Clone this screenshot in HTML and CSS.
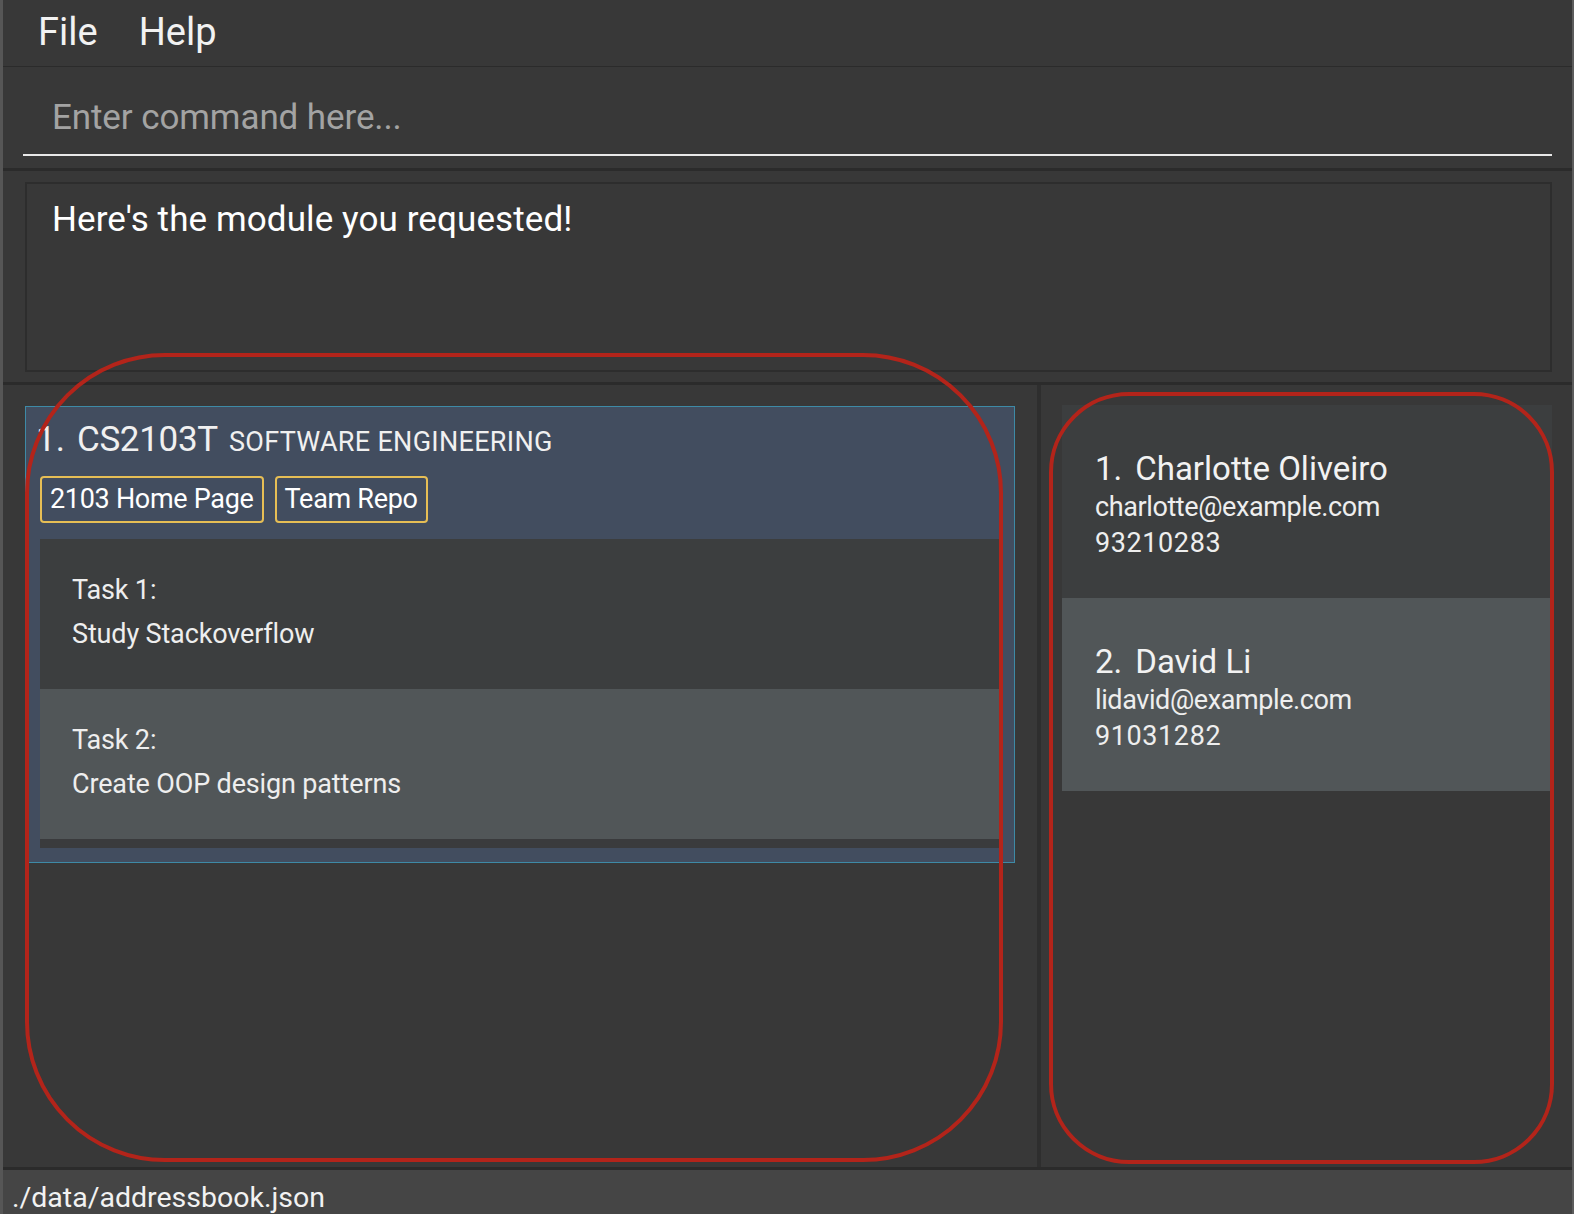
FILE: index.html
```html
<!DOCTYPE html>
<html lang="en">
<head>
<meta charset="utf-8">
<title>Module Book</title>
<link rel="stylesheet" href="styles.css">
</head>
<body>
<div class="window">
  <div class="menubar">
    <span class="menu-item">File</span>
    <span class="menu-item">Help</span>
  </div>
  <div class="command-area">
    <div class="command-field">Enter command here...</div>
  </div>
  <div class="result-area">
    <div class="result-box">Here's the module you requested!</div>
  </div>
  <div class="lists">
    <div class="module-panel">
      <div class="module-card">
        <div class="module-header">
          <span class="idx">1.</span>
          <span class="code">CS2103T</span>
          <span class="title">SOFTWARE ENGINEERING</span>
        </div>
        <div class="tags">
          <span class="tag">2103 Home Page</span>
          <span class="tag">Team Repo</span>
        </div>
        <div class="task-list">
          <div class="task even">
            <div>Task 1:</div>
            <div>Study Stackoverflow</div>
          </div>
          <div class="task odd">
            <div>Task 2:</div>
            <div>Create OOP design patterns</div>
          </div>
        </div>
      </div>
    </div>
    <div class="divider"></div>
    <div class="person-panel">
      <div class="person-list">
        <div class="person even">
          <div class="name"><span class="pidx">1.</span>Charlotte Oliveiro</div>
          <div class="detail email">charlotte@example.com</div>
          <div class="detail phone">93210283</div>
        </div>
        <div class="person odd">
          <div class="name"><span class="pidx">2.</span>David Li</div>
          <div class="detail email">lidavid@example.com</div>
          <div class="detail phone">91031282</div>
        </div>
      </div>
    </div>
  </div>
  <div class="statusbar">./data/addressbook.json</div>
</div>
<div class="annot annot-left"></div>
<div class="annot annot-right"></div>
</body>
</html>
```
FILE: styles.css
```css
html, body {
  margin: 0;
  padding: 0;
  background: #383838;
  overflow: hidden;
}
body {
  width: 1574px;
  height: 1214px;
  position: relative;
  font-family: "Roboto", "Liberation Sans", sans-serif;
  color: #ffffff;
}
.window {
  box-sizing: border-box;
  width: 1574px;
  height: 1214px;
  display: flex;
  flex-direction: column;
  border-left: 3px solid #565656;
  border-right: 2px solid #5c5c5c;
  background: #383838;
}
.menubar {
  height: 66px;
  flex: none;
  display: flex;
  gap: 41px;
  padding-left: 35px;
  border-bottom: 1px solid #2b2b2b;
}
.menu-item {
  font-size: 38px;
  line-height: 46px;
  margin-top: 9px;
  color: #f2f2f2;
}
.command-area {
  height: 101px;
  flex: none;
  padding: 0 20px;
  border-bottom: 3px solid #2b2b2b;
}
.command-field {
  margin-top: 30px;
  height: 59px;
  box-sizing: border-box;
  padding-left: 29px;
  font-size: 35px;
  line-height: 42px;
  color: #a3a3a3;
  letter-spacing: -0.1px;
  border-bottom: 2px solid #e8e8e8;
}
.result-area {
  height: 214px;
  flex: none;
  box-sizing: border-box;
  padding: 11px 20px 13px 22px;
  border-bottom: 3px solid #2b2b2b;
}
.result-box {
  box-sizing: border-box;
  height: 190px;
  border: 2px solid #2d2d2d;
  padding: 15px 25px;
  font-size: 35px;
  line-height: 42px;
  letter-spacing: 0.1px;
  color: #ffffff;
}
.lists {
  flex: 1;
  display: flex;
  min-height: 0;
  border-bottom: 3px solid #2b2b2b;
}
.module-panel {
  width: 1034px;
  flex: none;
  box-sizing: border-box;
  padding: 21px 22px 0 22px;
}
.divider {
  width: 4px;
  flex: none;
  background: #2e2e2e;
}
.person-panel {
  flex: 1;
  box-sizing: border-box;
  padding: 20px 20px 0 21px;
}
.module-card {
  width: 990px;
  box-sizing: border-box;
  background: #424d5f;
  border: 1.5px solid #3e8aa6;
  padding: 0 15px 14px 14px;
}
.module-header {
  padding-top: 12px;
  display: flex;
  align-items: baseline;
  line-height: 42px;
}
.idx {
  font-size: 35px;
  margin-left: -4px;
  margin-right: 12px;
  color: #f0f0f0;
}
.code {
  font-size: 35px;
  margin-right: 11px;
  color: #f0f0f0;
  letter-spacing: -0.3px;
}
.title {
  font-size: 27px;
  letter-spacing: 0.3px;
  color: #f0f0f0;
}
.tags {
  display: flex;
  gap: 11px;
  margin-top: 13px;
}
.tag {
  border: 2px solid #e6be55;
  border-radius: 4px;
  padding: 0 8px;
  font-size: 27px;
  line-height: 43px;
  letter-spacing: -0.3px;
  color: #ffffff;
}
.task-list {
  margin-top: 16px;
  background: #3a3b3d;
  padding-bottom: 9px;
}
.task {
  height: 150px;
  box-sizing: border-box;
  padding: 29px 33px 0 32px;
  font-size: 27px;
  line-height: 44px;
  letter-spacing: -0.15px;
  color: #eeeeee;
}
.even { background: #3c3e3f; }
.odd { background: #515658; }
.person-list {
  width: 490px;
}
.person {
  height: 193px;
  box-sizing: border-box;
  padding: 43px 33px 0;
}
.name {
  font-size: 33px;
  line-height: 41px;
  color: #f2f2f2;
}
.pidx {
  margin-right: 13px;
}
.detail {
  font-size: 27px;
  line-height: 36px;
  color: #eeeeee;
}
.email {
  letter-spacing: -0.4px;
}
.phone {
  letter-spacing: 0.6px;
}
.statusbar {
  flex: none;
  height: 44px;
  box-sizing: border-box;
  background: #454545;
  padding: 11px 0 0 9px;
  font-size: 28.5px;
  line-height: 34px;
  color: #f2f2f2;
  overflow: hidden;
}
.annot {
  position: absolute;
  box-sizing: border-box;
  border: 4.5px solid #b3241a;
}
.annot-left {
  left: 25px;
  top: 353px;
  width: 978px;
  height: 809px;
  border-radius: 140px;
}
.annot-right {
  left: 1049px;
  top: 392px;
  width: 505px;
  height: 772px;
  border-radius: 80px;
}
```
